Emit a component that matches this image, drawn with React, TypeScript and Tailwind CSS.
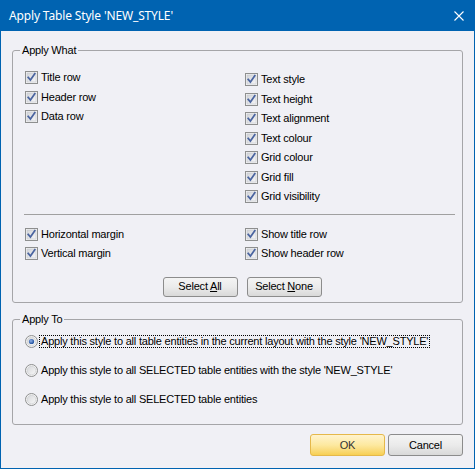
import React from "react";

const font = { fontFamily: '"Liberation Sans", Arial, sans-serif' };

function CheckBox() {
  return (
    <svg width="13" height="13" viewBox="0 0 13 13" className="shrink-0">
      <defs>
        <linearGradient id="cbg" x1="0" y1="0" x2="1" y2="1">
          <stop offset="0" stopColor="#d2d4d8" />
          <stop offset="1" stopColor="#f6f6f8" />
        </linearGradient>
      </defs>
      <rect x="0.5" y="0.5" width="12" height="12" fill="#f4f4f4" stroke="#8e8f8f" />
      <rect x="2" y="2" width="9" height="9" fill="url(#cbg)" stroke="#c4c6cc" strokeWidth="0.6" />
      <path d="M3.2 6.4 L5.4 9 L9.8 2.8" fill="none" stroke="#4a64a0" strokeWidth="1.7" strokeLinecap="square" strokeLinejoin="miter" />
    </svg>
  );
}

function Radio({ checked }: { checked?: boolean }) {
  return (
    <svg width="13" height="13" viewBox="0 0 13 13" className="shrink-0">
      <defs>
        <linearGradient id="rbg" x1="0" y1="0" x2="1" y2="1">
          <stop offset="0" stopColor="#d6d7da" />
          <stop offset="1" stopColor="#f8f8f8" />
        </linearGradient>
        <radialGradient id="rdot" cx="0.4" cy="0.4" r="0.6">
          <stop offset="0" stopColor="#8fb0e8" />
          <stop offset="1" stopColor="#1e4f9c" />
        </radialGradient>
      </defs>
      <circle cx="6.5" cy="6.5" r="6" fill="#f2f2f2" stroke="#8e8f8f" />
      <circle cx="6.5" cy="6.5" r="4.3" fill="url(#rbg)" stroke="#c8c9cd" strokeWidth="0.6" />
      {checked && <circle cx="6.5" cy="6.5" r="2.6" fill="url(#rdot)" />}
    </svg>
  );
}

function CheckRow({ label }: { label: string }) {
  return (
    <div className="flex items-center h-[19.5px] gap-[3px]">
      <CheckBox />
      <span className="text-[11px] leading-[13px] tracking-[-0.2px] text-black whitespace-nowrap">{label}</span>
    </div>
  );
}

function WinButton({ children, primary }: { children: React.ReactNode; primary?: boolean }) {
  return (
    <div
      className={
        primary
          ? "flex items-center justify-center rounded-[3px] border border-[#e5b84a] bg-gradient-to-b from-[#fff3cd] via-[#fde9a0] to-[#f7cf52] text-[11px] tracking-[-0.2px] text-[#333333]"
          : "flex items-center justify-center rounded-[3px] border border-[#8c8c8c] bg-gradient-to-b from-[#f4f4f4] via-[#ebebeb] to-[#d9d9d9] text-[11px] tracking-[-0.2px] text-black"
      }
      style={{ width: 75, height: primary !== undefined ? 22 : 20 }}
    >
      {children}
    </div>
  );
}

export default function App() {
  return (
    <div className="w-[475px] h-[469px] bg-[#0063b1] flex flex-col px-[1px] pb-[1px]" style={font}>
      <div className="h-[31px] flex items-center justify-between pl-[8px] pr-[10px] shrink-0">
        <span className="text-white text-[12px] tracking-[-0.15px]" style={{ fontFamily: '"Noto Sans", "Liberation Sans", sans-serif' }}>
          Apply Table Style 'NEW_STYLE'
        </span>
        <svg width="10" height="10" viewBox="0 0 10 10">
          <path d="M0.5 0.5 L9.5 9.5 M9.5 0.5 L0.5 9.5" stroke="#ffffff" strokeWidth="1.1" />
        </svg>
      </div>
      <div className="flex-1 bg-[#f0f0f5] px-[11px] flex flex-col">
        {/* Apply What */}
        <div className="relative mt-[19px] h-[253px] border border-[#a5a5a8] rounded-[3px] flex flex-col">
          <span className="absolute top-[-8px] left-[7px] px-[2px] bg-[#f0f0f5] text-[11px] leading-[14px] tracking-[-0.2px] text-black">
            Apply What
          </span>
          <div className="flex">
            <div className="w-[232px] pl-[12px] pt-[17px]">
              <CheckRow label="Title row" />
              <CheckRow label="Header row" />
              <CheckRow label="Data row" />
            </div>
            <div className="pt-[19px]">
              <CheckRow label="Text style" />
              <CheckRow label="Text height" />
              <CheckRow label="Text alignment" />
              <CheckRow label="Text colour" />
              <CheckRow label="Grid colour" />
              <CheckRow label="Grid fill" />
              <CheckRow label="Grid visibility" />
            </div>
          </div>
          <div className="mt-[7px] ml-[11px] mr-[7px] h-[1px] bg-[#a0a0a0]" />
          <div className="flex mt-[10px]">
            <div className="w-[232px] pl-[12px]">
              <CheckRow label="Horizontal margin" />
              <CheckRow label="Vertical margin" />
            </div>
            <div>
              <CheckRow label="Show title row" />
              <CheckRow label="Show header row" />
            </div>
          </div>
          <div className="flex justify-center gap-[9px] mt-[13px] pl-[9px]">
            <WinButton>
              <span>
                Select <span className="underline">A</span>ll
              </span>
            </WinButton>
            <WinButton>
              <span>
                Select <span className="underline">N</span>one
              </span>
            </WinButton>
          </div>
        </div>

        {/* Apply To */}
        <div className="relative mt-[16px] h-[106px] border border-[#a5a5a8] rounded-[3px] flex flex-col gap-[9px] pl-[12px] pt-[11px]">
          <span className="absolute top-[-8px] left-[7px] px-[2px] bg-[#f0f0f5] text-[11px] leading-[14px] tracking-[-0.2px] text-black">
            Apply To
          </span>
          <div className="flex items-center h-[20px] gap-[2px]">
            <Radio checked />
            <span className="text-[11px] leading-[11px] tracking-[-0.2px] text-black whitespace-nowrap outline-1 outline-dotted outline-black px-[1px] py-[0px]">
              Apply this style to all table entities in the current layout with the style 'NEW_STYLE'
            </span>
          </div>
          <div className="flex items-center h-[20px] gap-[3px]">
            <Radio />
            <span className="text-[11px] leading-[13px] tracking-[-0.2px] text-black whitespace-nowrap">
              Apply this style to all SELECTED table entities with the style 'NEW_STYLE'
            </span>
          </div>
          <div className="flex items-center h-[20px] gap-[3px]">
            <Radio />
            <span className="text-[11px] leading-[13px] tracking-[-0.2px] text-black whitespace-nowrap">
              Apply this style to all SELECTED table entities
            </span>
          </div>
        </div>

        <div className="flex justify-end gap-[3px] mt-[9px]">
          <WinButton primary>OK</WinButton>
          <WinButton primary={false}>Cancel</WinButton>
        </div>
      </div>
    </div>
  );
}
